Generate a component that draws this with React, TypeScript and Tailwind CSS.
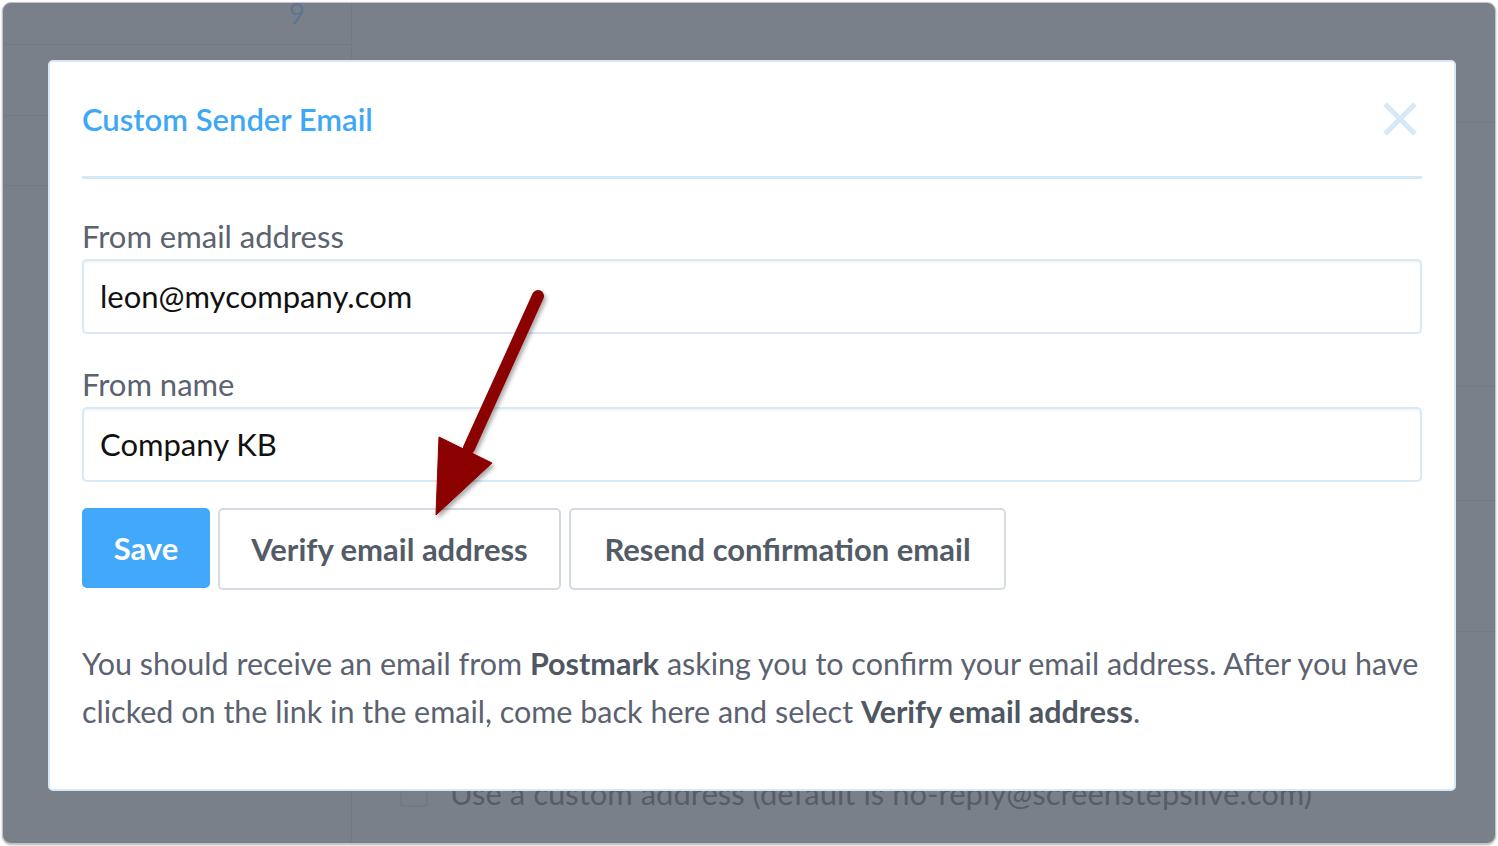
import React from "react";

const font = { fontFamily: "Lato, 'Liberation Sans', sans-serif" };

const Arrow = () => (
	<svg
		className="absolute left-0 top-0 pointer-events-none"
		width="1498"
		height="846"
		viewBox="0 0 1498 846"
	>
		<defs>
			<filter id="sh" x="-20%" y="-20%" width="140%" height="140%">
				<feDropShadow dx="2" dy="3" stdDeviation="2" floodColor="#000" floodOpacity="0.35" />
			</filter>
		</defs>
		<g filter="url(#sh)" fill="#8b0000" stroke="#8b0000">
			<line x1="535" y1="293" x2="466" y2="445" strokeWidth="12" strokeLinecap="round" />
			<polygon points="436,434 489,460 433,512" strokeWidth="1" strokeLinejoin="round" />
		</g>
	</svg>
);

const Field = ({ label, value }: { label: string; value: string }) => (
	<div>
		<div className="text-[31px] leading-[40px] text-[#5b6270]">{label}</div>
		<div className="mt-[3px] flex h-[75px] items-center rounded-[5px] border-2 border-[#d7e9f8] bg-white pl-[16px] shadow-[inset_0_2px_2px_rgba(0,0,0,0.04)]">
			<span className="text-[31px] text-[#111]">{value}</span>
		</div>
	</div>
);

export default function App() {
	return (
		<div className="h-[846px] w-[1498px] bg-white p-[2px]" style={font}>
			<div className="relative flex h-full overflow-hidden rounded-[9px] border border-[#c4c4c4] bg-[#7a808a] shadow-[0_1px_2px_rgba(0,0,0,0.3)]">
				{/* dimmed page behind the overlay */}
				<div className="w-[349px] border-r border-[#737985]">
					<div className="flex h-[42px] justify-end border-b border-[#737985] pr-[46px] text-[28px] leading-[20px] text-[#5f7592]">
						9
					</div>
					<div className="h-[71px] border-b border-[#737985]" />
					<div className="h-[70px] border-b border-[#737985]" />
				</div>
				<div className="flex flex-1 flex-col">
					<div className="h-[120px] border-b border-[#737985]" />
					<div className="h-[264px] border-b border-[#737985]" />
					<div className="h-[114px] border-b border-[#737985]" />
					<div className="h-[131px] border-b border-[#737985]" />
					<div className="flex items-center gap-[22px] pl-[48px] pt-[146px]">
						<div className="h-[28px] w-[28px] rounded-[4px] border-2 border-[#737985]" />
						<span className="text-[31px] leading-[30px] text-[#575d68]">
							Use a custom address (default is no-reply@screenstepslive.com)
						</span>
					</div>
				</div>

				{/* modal */}
				<div className="absolute left-[45px] top-[57px] flex h-[731px] w-[1408px] flex-col rounded-[5px] border-2 border-[#d4e8f8] bg-white px-[32px]">
					<div className="flex h-[114px] items-center justify-between">
						<h2 className="text-[31px] font-semibold text-[#3ea8f6]">Custom Sender Email</h2>
						<svg width="36" height="36" viewBox="0 0 36 36" className="mr-[4px]">
							<path d="M3 3 L33 33 M33 3 L3 33" stroke="#d6e9f8" strokeWidth="5" />
						</svg>
					</div>
					<div className="h-[3px] bg-[#d3e8f8]" />

					<div className="mt-[37px] flex flex-col gap-[30px]">
						<Field label="From email address" value="leon@mycompany.com" />
						<Field label="From name" value="Company KB" />
					</div>

					<div className="mt-[26px] flex gap-[8px]">
						<button className="h-[80px] w-[128px] rounded-[5px] bg-[#42a8fa] text-[31px] font-bold text-white">
							Save
						</button>
						<button className="h-[82px] w-[343px] rounded-[5px] border-2 border-[#d5dae1] bg-white text-[31px] font-bold text-[#535b67]">
							Verify email address
						</button>
						<button className="h-[82px] w-[437px] rounded-[5px] border-2 border-[#d5dae1] bg-white text-[31px] font-bold text-[#535b67]">
							Resend confirmation email
						</button>
					</div>

					<p className="mt-[49px] text-[30.5px] leading-[48px] text-[#5b6270]">
						You should receive an email from <b className="font-bold text-[#4f5763]">Postmark</b> asking you to
						confirm your email address. After you have
						<br />
						clicked on the link in the email, come back here and select{" "}
						<b className="font-bold text-[#4f5763]">Verify email address</b>.
					</p>
				</div>

				<Arrow />
			</div>
		</div>
	);
}
